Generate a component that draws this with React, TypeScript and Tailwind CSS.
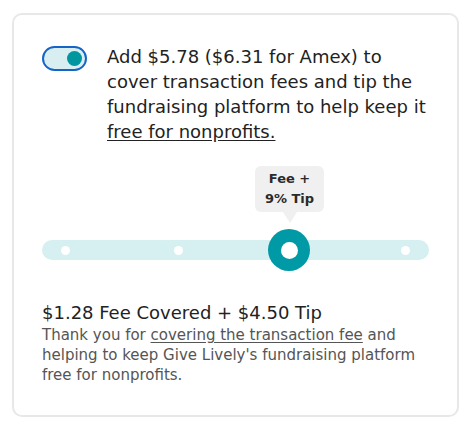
export default function App() {
  return (
    <div className="min-h-screen bg-white px-3 pb-3 pt-[13px]" style={{ fontFamily: '"DejaVu Sans", sans-serif' }}>
      <div className="rounded-[10px] border-2 border-[#e8e8e8] bg-white px-[28px] pb-[30px] pt-[29px]">
        <div className="flex gap-5">
          <div className="mt-[2px] flex h-[25px] w-[45px] shrink-0 items-center justify-end rounded-full border-2 border-[#1565c8] bg-[#d8eef1] pr-[3px]">
            <div className="h-[15px] w-[15px] rounded-full bg-[#00969f]" />
          </div>
          <p className="whitespace-nowrap text-[18px] leading-[25px] text-[#222]">
            <span className="block">Add $5.78 ($6.31 for Amex) to</span>
            <span className="block">cover transaction fees and tip the</span>
            <span className="block">fundraising platform to help keep it</span>
            <span className="block underline underline-offset-2">free for nonprofits.</span>
          </p>
        </div>

        <div className="mt-[22px] flex">
          <div className="relative ml-[213px] flex w-[69px] flex-col items-center rounded-md bg-[#f0f0f0] py-[3px] text-center text-[13px] font-bold leading-[20px] text-[#2a2a2a]">
            <span>Fee +</span>
            <span>9% Tip</span>
            <div className="absolute -bottom-[11px] left-1/2 h-0 w-0 -translate-x-1/2 border-x-[7px] border-t-[11px] border-x-transparent border-t-[#f0f0f0]" />
          </div>
        </div>

        <div className="relative mt-[28px] flex h-5 items-center justify-between rounded-full bg-[#d6eff1] px-[19px]">
          <div className="h-[9px] w-[9px] rounded-full bg-white" />
          <div className="h-[9px] w-[9px] rounded-full bg-white" />
          <div className="h-[9px] w-[9px] rounded-full bg-white opacity-0" />
          <div className="h-[9px] w-[9px] rounded-full bg-white" />
          <div className="absolute left-[226px] top-1/2 flex h-[42px] w-[42px] -translate-y-1/2 items-center justify-center rounded-full bg-[#0099a6]">
            <div className="h-[17px] w-[17px] rounded-full bg-white" />
          </div>
        </div>

        <div className="mt-[41px]">
          <div className="text-[18px] leading-[24px] text-[#222]">$1.28 Fee Covered + $4.50 Tip</div>
          <p className="whitespace-nowrap text-[15px] leading-[20px] text-[#555]">
            <span className="block">
              Thank you for <span className="underline underline-offset-2">covering the transaction fee</span> and
            </span>
            <span className="block">helping to keep Give Lively's fundraising platform</span>
            <span className="block">free for nonprofits.</span>
          </p>
        </div>
      </div>
    </div>
  );
}
